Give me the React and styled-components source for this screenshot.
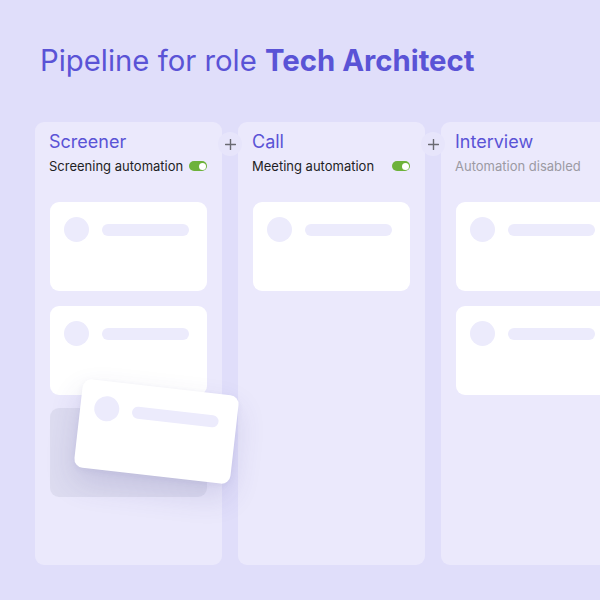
import React from "react";
import styled, { createGlobalStyle } from "styled-components";

const Global = createGlobalStyle`
  html, body { margin: 0; padding: 0; background: #E0DEFA; }
  body { font-family: Inter, "Noto Sans", sans-serif; -webkit-font-smoothing: antialiased; }
  #root { width: 600px; height: 600px; overflow: hidden; }
`;

const Page = styled.div`
  width: 600px;
  height: 600px;
  box-sizing: border-box;
  padding: 43px 0 0 35px;
  background: #E0DEFA;
  overflow: hidden;
`;

const Title = styled.h1`
  margin: 0 0 43px 5px;
  font-size: 29.3px;
  line-height: 36px;
  font-weight: 400;
  color: #5A53D6;
  white-space: nowrap;
  letter-spacing: 0;
  strong { font-weight: 700; }
`;

const Board = styled.div`
  display: flex;
  gap: 16px;
  align-items: flex-start;
`;

const Column = styled.div`
  position: relative;
  flex: 0 0 187px;
  height: 443px;
  box-sizing: border-box;
  padding: 8px 15px 0 14px;
  background: #EBE9FC;
  border-radius: 9px;
  display: flex;
  flex-direction: column;
`;

const ColTitle = styled.div`
  font-size: 18px;
  line-height: 24px;
  color: #5A53D6;
  font-weight: 400;
`;

const SubRow = styled.div`
  margin-top: 3px;
  display: flex;
  align-items: center;
  justify-content: space-between;
  font-size: 13px;
  line-height: 18px;
  color: ${(p) => (p.$disabled ? "#9B9AA3" : "#1E1E24")};
`;

const Toggle = styled.span`
  position: relative;
  width: 18px;
  height: 10px;
  border-radius: 5px;
  background: #6DB23A;
  &::after {
    content: "";
    position: absolute;
    right: 1.5px;
    top: 1.5px;
    width: 7px;
    height: 7px;
    border-radius: 50%;
    background: #fff;
  }
`;

const Cards = styled.div`
  margin-top: 27px;
  display: flex;
  flex-direction: column;
  gap: 15px;
  padding-left: 1px;
`;

const Card = styled.div`
  box-sizing: border-box;
  width: 157px;
  height: 89px;
  border-radius: 9px;
  background: ${(p) => (p.$ghost ? "#DDDCF0" : "#FFFFFF")};
  margin-top: ${(p) => (p.$ghost ? "-2px" : "0")};
  padding: 15px 18px 0 14px;
  display: flex;
  align-items: flex-start;
  gap: 13px;
`;

const Avatar = styled.span`
  flex: 0 0 25px;
  height: 25px;
  border-radius: 50%;
  background: #ECEBFC;
`;

const Line = styled.span`
  margin-top: 7px;
  flex: 1;
  height: 12px;
  border-radius: 6px;
  background: #ECEBFC;
`;

const Dragged = styled(Card)`
  position: absolute;
  left: 43px;
  top: 265px;
  transform: rotate(6.5deg);
  box-shadow: 0 14px 30px rgba(70, 60, 140, 0.16), 0 2px 6px rgba(70, 60, 140, 0.06);
  z-index: 3;
`;

const AddBtn = styled.span`
  position: absolute;
  right: -20px;
  top: 10px;
  width: 24px;
  height: 24px;
  border-radius: 50%;
  background: #E7E5FB;
  color: #6A6A72;
  display: flex;
  align-items: center;
  justify-content: center;
  z-index: 2;
`;

const Plus = () => (
  <svg width="11" height="11" viewBox="0 0 11 11">
    <path d="M5.5 0.5v10M0.5 5.5h10" stroke="currentColor" strokeWidth="1.4" strokeLinecap="round" />
  </svg>
);

const PlaceholderCard = ({ ghost }) =>
  ghost ? (
    <Card $ghost />
  ) : (
    <Card>
      <Avatar />
      <Line />
    </Card>
  );

const columns = [
  { title: "Screener", sub: "Screening automation", on: true, cards: ["c", "c", "ghost"], drag: true, add: true },
  { title: "Call", sub: "Meeting automation", on: true, cards: ["c"], add: true },
  { title: "Interview", sub: "Automation disabled", on: false, cards: ["c", "c"] },
];

export default function App() {
  return (
    <Page>
      <Global />
      <Title>
        Pipeline for role <strong>Tech Architect</strong>
      </Title>
      <Board>
        {columns.map((c) => (
          <Column key={c.title}>
            <ColTitle>{c.title}</ColTitle>
            <SubRow $disabled={!c.on}>
              <span>{c.sub}</span>
              {c.on && <Toggle />}
            </SubRow>
            <Cards>
              {c.cards.map((k, i) => (
                <PlaceholderCard key={i} ghost={k === "ghost"} />
              ))}
            </Cards>
            {c.drag && (
              <Dragged>
                <Avatar />
                <Line />
              </Dragged>
            )}
            {c.add && (
              <AddBtn>
                <Plus />
              </AddBtn>
            )}
          </Column>
        ))}
      </Board>
    </Page>
  );
}
